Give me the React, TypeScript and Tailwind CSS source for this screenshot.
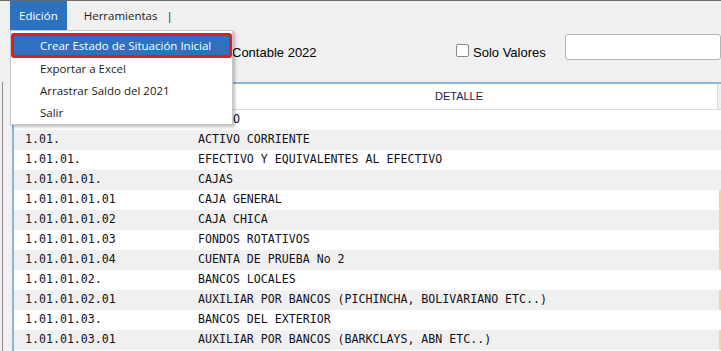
import React from 'react';

type Row = { code: string; detail: string; mark?: boolean };

const rows: Row[] = [
  { code: '1.', detail: 'ACTIVO' },
  { code: '1.01.', detail: 'ACTIVO CORRIENTE' },
  { code: '1.01.01.', detail: 'EFECTIVO Y EQUIVALENTES AL EFECTIVO' },
  { code: '1.01.01.01.', detail: 'CAJAS' },
  { code: '1.01.01.01.01', detail: 'CAJA GENERAL', mark: true },
  { code: '1.01.01.01.02', detail: 'CAJA CHICA', mark: true },
  { code: '1.01.01.01.03', detail: 'FONDOS ROTATIVOS', mark: true },
  { code: '1.01.01.01.04', detail: 'CUENTA DE PRUEBA No 2', mark: true },
  { code: '1.01.01.02.', detail: 'BANCOS LOCALES' },
  { code: '1.01.01.02.01', detail: 'AUXILIAR POR BANCOS (PICHINCHA, BOLIVARIANO ETC..)', mark: true },
  { code: '1.01.01.03.', detail: 'BANCOS DEL EXTERIOR' },
  { code: '1.01.01.03.01', detail: 'AUXILIAR POR BANCOS (BARKCLAYS, ABN ETC..)', mark: true },
  { code: '', detail: '' },
];

const menuItems = ['Exportar a Excel', 'Arrastrar Saldo del 2021', 'Salir'];

export default function App() {
  return (
    <div className="relative w-[721px] h-[351px] overflow-hidden bg-[#f0f0f0] font-['Liberation_Sans',sans-serif]">
      {/* Menu bar */}
      <div className="flex items-stretch h-[30px] pl-[10px] border-t border-[#6b6b6b] font-['Open_Sans',sans-serif] text-[11.5px]">
        <div className="flex items-center px-[9px] bg-[#2d72bf] text-white">Edición</div>
        <div className="flex items-center gap-[9px] pl-[17px] text-[#1a1a1a]">
          <span>Herramientas</span>
          <span>|</span>
        </div>
      </div>

      {/* Toolbar */}
      <div className="flex items-start h-[52px] text-[13px] text-black">
        <span className="ml-[232px] w-[224px] mt-[13px]">Contable 2022</span>
        <span className="w-[13px] h-[13px] mt-[14px] border border-[#8a8a8a] rounded-[2px] bg-white" />
        <span className="ml-[4px] w-[92px] mt-[13px]">Solo Valores</span>
        <div className="flex-1 h-[26px] mt-[4px] bg-white border border-[#b4b4b4] rounded-[3px]" />
      </div>

      {/* Grid */}
      <div className="flex">
        <div className="w-[12px] flex">
          <div className="w-[2px]" />
          <div className="w-px bg-[#8c8c8c]" />
        </div>
        <div className="flex-1 border-l-2 border-t-2 border-[#8ab6e2] bg-white font-['DejaVu_Sans_Mono',monospace] text-[11.6px] text-[#101018]">
          <div className="flex h-[26px] border-b border-[#dcdcdc] font-['Liberation_Sans',sans-serif] text-[11px] text-[#222244]">
            <div className="w-[181px]" />
            <div className="w-[522px] flex items-center justify-center pl-[6px]">DETALLE</div>
            <div className="flex-1 border-l border-[#dcdcdc] bg-[#f0f0f0]" />
          </div>
          {rows.map((r, i) => (
            <div key={i} className={`flex h-[20px] items-center ${i % 2 === 1 ? 'bg-[#f0f0f0]' : 'bg-white'}`}>
              <div className="w-[181px] pl-[11px] whitespace-pre">{r.code}</div>
              <div className="flex-1 pl-[3px] whitespace-pre">{r.detail}</div>
              <div className={`w-[2px] h-full ${r.mark ? 'bg-[#f8d49c]' : ''}`} />
            </div>
          ))}
        </div>
      </div>

      {/* Dropdown menu */}
      <div className="absolute left-[10px] top-[30px] w-[223px] h-[95px] bg-white border border-[#c8c8c8] shadow-[2px_2px_3px_rgba(0,0,0,0.25)] font-['Open_Sans',sans-serif] text-[11.5px] text-[#1a1a1a] pt-[2px]">
        <div className="h-[25px] flex items-center pl-[26px] bg-[#2d72bf] text-white border-[3px] border-[#e01b22] rounded-[3px]">
          Crear Estado de Situación Inicial
        </div>
        {menuItems.map((m) => (
          <div key={m} className="h-[22px] flex items-center pl-[29px]">
            {m}
          </div>
        ))}
      </div>
    </div>
  );
}
